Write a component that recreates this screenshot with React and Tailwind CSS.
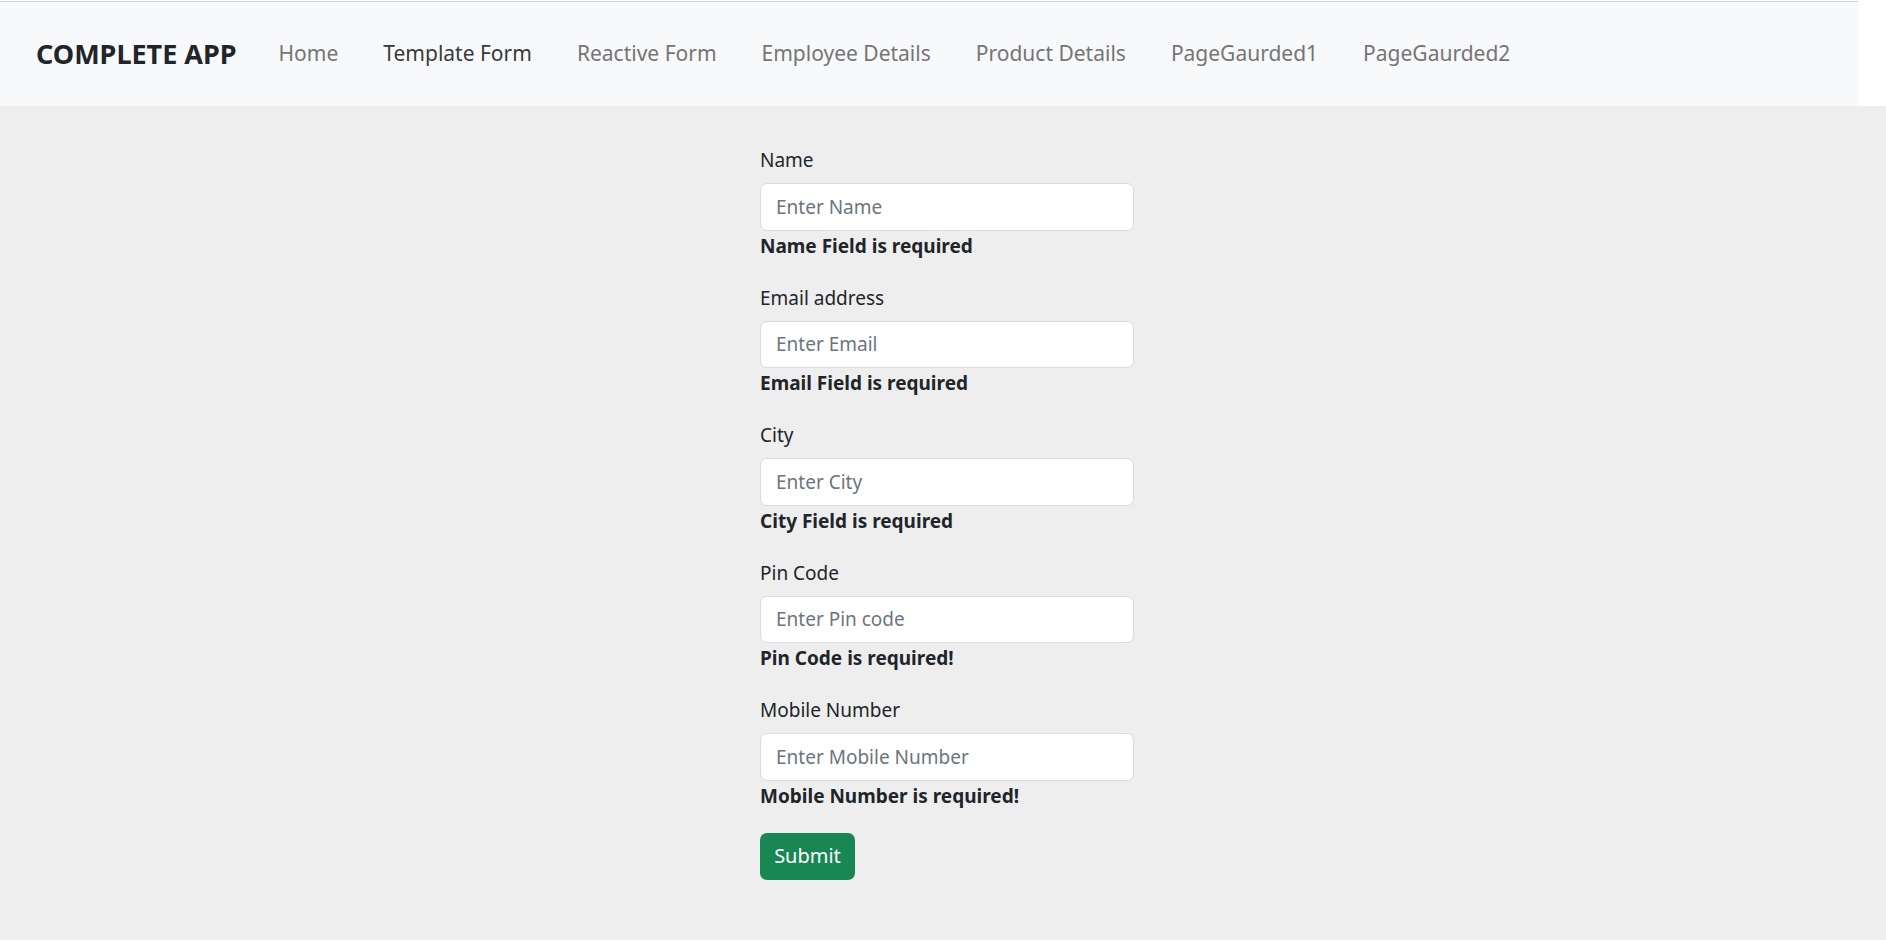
import React from 'react'

const links = [
  { label: 'Home', active: false },
  { label: 'Template Form', active: true },
  { label: 'Reactive Form', active: false },
  { label: 'Employee Details', active: false },
  { label: 'Product Details', active: false },
  { label: 'PageGaurded1', active: false },
  { label: 'PageGaurded2', active: false },
]

const fields = [
  { label: 'Name', placeholder: 'Enter Name', error: 'Name Field is required' },
  { label: 'Email address', placeholder: 'Enter Email', error: 'Email Field is required' },
  { label: 'City', placeholder: 'Enter City', error: 'City Field is required' },
  { label: 'Pin Code', placeholder: 'Enter Pin code', error: 'Pin Code is required!' },
  { label: 'Mobile Number', placeholder: 'Enter Mobile Number', error: 'Mobile Number is required!' },
]

const App = () => {
  return (
    <div className="min-h-[940px] bg-[#eeeeee] font-['Noto_Sans',sans-serif] text-[#212529]">
      {/* Navbar */}
      <div className="h-px bg-white" />
      <div className="flex bg-white">
        <nav className="flex h-[105px] w-[1858px] items-center border-t border-[#d4d4d4] bg-[#f8f9fa] pl-[36px]">
          <span className="text-[27px] font-bold text-[#212529]">COMPLETE APP</span>
          <div className="ml-[42px] flex items-center gap-[45px]">
            {links.map(link => (
              <a
                key={link.label}
                className={`text-[21px] ${link.active ? 'text-[#3a3a3a]' : 'text-[#757575]'}`}
              >
                {link.label}
              </a>
            ))}
          </div>
        </nav>
      </div>

      {/* Form */}
      <div className="pl-[760px] pt-[39px]">
        <form className="w-[374px]">
          {fields.map(field => (
            <div key={field.label} className="mb-[22px]">
              <label className="mb-[8px] block text-[19px] leading-[30px]">{field.label}</label>
              <input
                placeholder={field.placeholder}
                className="block h-[47.5px] w-full rounded-[7px] border border-[#d9dce0] bg-white px-[15px] text-[19px] outline-none placeholder:text-[#6c757d]"
              />
              <div className="text-[19px] font-bold leading-[30px]">{field.error}</div>
            </div>
          ))}
          <button
            type="button"
            className="h-[47px] w-[95px] rounded-[7px] bg-[#198754] text-[20px] text-white"
          >
            Submit
          </button>
        </form>
      </div>
    </div>
  )
}

export default App
